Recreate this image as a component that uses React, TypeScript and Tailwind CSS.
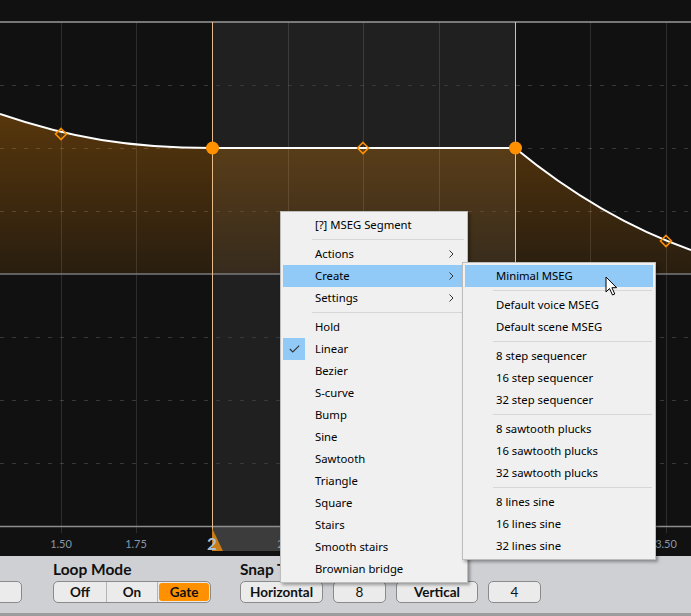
import React from 'react'

const gridX = [61, 136, 288, 363, 439, 590, 666]
const dashY = [85, 148, 211, 337, 400, 463]
// labels under the open menus are left out, only visible ones are drawn
const labels: { x: number; t: string; major?: boolean }[] = [
  { x: 61, t: '1.50' },
  { x: 136, t: '1.75' },
  { x: 212, t: '2', major: true },
  { x: 288, t: '2.25' },
  { x: 666, t: '3.50' },
]

type Entry = { label?: string; sep?: boolean; sub?: boolean; active?: boolean; checked?: boolean }

const mainMenu: Entry[] = [
  { label: '[?] MSEG Segment' },
  { sep: true },
  { label: 'Actions', sub: true },
  { label: 'Create', sub: true, active: true },
  { label: 'Settings', sub: true },
  { sep: true },
  { label: 'Hold' },
  { label: 'Linear', checked: true },
  { label: 'Bezier' },
  { label: 'S-curve' },
  { label: 'Bump' },
  { label: 'Sine' },
  { label: 'Sawtooth' },
  { label: 'Triangle' },
  { label: 'Square' },
  { label: 'Stairs' },
  { label: 'Smooth stairs' },
  { label: 'Brownian bridge' },
]

const createMenu: Entry[] = [
  { label: 'Minimal MSEG', active: true },
  { sep: true },
  { label: 'Default voice MSEG' },
  { label: 'Default scene MSEG' },
  { sep: true },
  { label: '8 step sequencer' },
  { label: '16 step sequencer' },
  { label: '32 step sequencer' },
  { sep: true },
  { label: '8 sawtooth plucks' },
  { label: '16 sawtooth plucks' },
  { label: '32 sawtooth plucks' },
  { sep: true },
  { label: '8 lines sine' },
  { label: '16 lines sine' },
  { label: '32 lines sine' },
]

function Diamond({ x, y }: { x: number; y: number }) {
  return (
    <path
      d={`M${x} ${y - 5.5} L${x + 5.5} ${y} L${x} ${y + 5.5} L${x - 5.5} ${y} Z`}
      fill="none"
      stroke="#ff9000"
      strokeWidth={1.6}
    />
  )
}

function Graph() {
  return (
    <svg width={691} height={556} className="block" style={{ fontFamily: 'Lato, sans-serif' }}>
      <defs>
        <linearGradient id="fill" x1="0" y1="110" x2="0" y2="274" gradientUnits="userSpaceOnUse">
          <stop offset="0" stopColor="#ff9000" stopOpacity={0.3} />
          <stop offset="1" stopColor="#ff9000" stopOpacity={0.1} />
        </linearGradient>
      </defs>
      <rect width={691} height={556} fill="#111111" />
      <rect x={212} y={22} width={303} height={504} fill="#202020" />
      <rect x={212} y={527} width={303} height={24} fill="#3c3c3c" />
      {dashY.map((y) => (
        <line key={y} x1={0} x2={691} y1={y + 0.5} y2={y + 0.5} stroke="#383838" strokeDasharray="4 8" />
      ))}
      {gridX.map((x) => (
        <line key={x} x1={x + 0.5} x2={x + 0.5} y1={22} y2={533} stroke="rgba(255,255,255,0.12)" />
      ))}
      <path
        d="M0 114 C70 138 130 148 212 148 L515 148 C560 185 620 225 691 250 L691 274 L0 274 Z"
        fill="url(#fill)"
      />
      <line x1={0} x2={691} y1={22} y2={22} stroke="#9a9a9a" strokeWidth={1.5} />
      <line x1={0} x2={691} y1={274} y2={274} stroke="#7a7a7a" strokeWidth={1.5} />
      <line x1={0} x2={691} y1={526.5} y2={526.5} stroke="#8e8e8e" strokeWidth={1.5} />
      <line x1={212.5} x2={212.5} y1={22} y2={551} stroke="#e8bb8a" />
      <line x1={515.5} x2={515.5} y1={22} y2={526} stroke="#e8bb8a" />
      <path
        d="M0 114 C70 138 130 148 212 148 L515 148 C560 185 620 225 691 250"
        fill="none"
        stroke="#ffffff"
        strokeWidth={2}
      />
      <Diamond x={61} y={134} />
      <Diamond x={363} y={148} />
      <Diamond x={666} y={241} />
      <circle cx={212.5} cy={148} r={6.5} fill="#ff9000" />
      <circle cx={515.5} cy={148} r={6.5} fill="#ff9000" />
      <polygon points="212,528 212,551 223,551" fill="#c97c17" />
      {labels.map((l) =>
        l.major ? (
          <text key={l.t} x={l.x} y={550} textAnchor="middle" fontSize={17} fontWeight={700} fill="#aec0d2">
            {l.t}
          </text>
        ) : (
          <text key={l.t} x={l.x} y={548} textAnchor="middle" fontSize={11} fill="#8898a8">
            {l.t}
          </text>
        )
      )}
    </svg>
  )
}

function Chevron() {
  return (
    <svg width={5} height={8} viewBox="0 0 5 8" className="absolute right-[11px] top-[7px]">
      <path d="M0.5 0.5 L4 4 L0.5 7.5" fill="none" stroke="#333" strokeWidth={1} />
    </svg>
  )
}

function Menu({ items, className, textLeft, sepLeft }: { items: Entry[]; className: string; textLeft: string; sepLeft: string }) {
  return (
    <div
      className={`absolute bg-[#f0f0f0] border border-[#bdbdbd] shadow-[2px_2px_3px_rgba(0,0,0,0.35)] px-[2px] ${className}`}
      style={{ fontFamily: '"Segoe UI", "Noto Sans", sans-serif' }}
    >
      {items.map((it, i) =>
        it.sep ? (
          <div key={i} className={`h-[7px] flex items-center pr-[1px] ${sepLeft}`}>
            <div className="h-px w-full bg-[#d7d7d7]" />
          </div>
        ) : (
          <div
            key={i}
            className={`relative h-[22px] flex items-center text-[11.3px] text-black ${textLeft} ${it.active ? 'bg-[#91c9f7]' : ''}`}
          >
            {it.checked && (
              <div className="absolute left-0 top-0 w-[22px] h-[22px] bg-[#91c9f7] flex items-center justify-center">
                <svg width={11} height={8} viewBox="0 0 11 8">
                  <path d="M0.8 4 L3.8 7 L10.2 0.6" fill="none" stroke="#333" strokeWidth={1.1} />
                </svg>
              </div>
            )}
            <span className="leading-none">{it.label}</span>
            {it.sub && <Chevron />}
          </div>
        )
      )}
    </div>
  )
}

function Cursor() {
  return (
    <svg width={14} height={21} viewBox="0 0 14 21" className="absolute left-[605px] top-[276px]">
      <path
        d="M1 1 L1 16 L4.5 12.5 L7.5 19 L9.8 18 L6.9 11.7 L11.6 11.7 Z"
        fill="#ffffff"
        stroke="#000000"
        strokeWidth={1}
        strokeLinejoin="round"
      />
    </svg>
  )
}

function Btn({ children, w, bold = true }: { children: React.ReactNode; w: string; bold?: boolean }) {
  return (
    <div
      className={`h-[22px] ${w} rounded-[5px] border border-[#8a8a8a] bg-[#ebebeb] flex items-center justify-center text-[13.5px] text-[#111] ${bold ? 'font-bold' : ''}`}
    >
      {children}
    </div>
  )
}

export default function App() {
  return (
    <div className="relative w-[691px] h-[616px] overflow-hidden bg-[#ced0d4]" style={{ fontFamily: 'Lato, sans-serif' }}>
      <Graph />
      <div className="h-[57px] flex items-start">
        <div className="mt-[25px] ml-[-20px] h-[22px] w-[42px] rounded-[5px] border border-[#8a8a8a] bg-[#ebebeb]" />
        <div className="ml-[31px] flex flex-col">
          <div className="text-[15.5px] font-bold text-[#111] leading-[18px] pt-[4px] h-[25px]">Loop Mode</div>
          <div className="flex h-[22px] w-[158px] rounded-[5px] border border-[#8a8a8a] bg-[#ebebeb] overflow-hidden text-[13.5px] font-bold text-[#111]">
            <div className="w-[53px] flex items-center justify-center border-r border-[#b4b4b4]">Off</div>
            <div className="w-[51px] flex items-center justify-center border-r border-[#b4b4b4]">On</div>
            <div className="flex-1 flex items-center justify-center bg-[#ff9000] m-[1px] rounded-[3px]">Gate</div>
          </div>
        </div>
        <div className="ml-[29px] flex flex-col">
          <div className="text-[15.5px] font-bold text-[#111] leading-[18px] pt-[4px] h-[25px]">Snap To</div>
          <div className="flex gap-[10px]">
            <Btn w="w-[83px]">Horizontal</Btn>
            <Btn w="w-[53px]" bold={false}>8</Btn>
            <Btn w="w-[82px]">Vertical</Btn>
            <Btn w="w-[53px]" bold={false}>4</Btn>
          </div>
        </div>
      </div>
      <div className="h-[3px] bg-[#9d9d9d]" />
      <Menu items={mainMenu} className="left-[280px] top-[211px] w-[188px] pt-[2px] pb-[2px]" textLeft="pl-[32px]" sepLeft="pl-[29px]" />
      <Menu items={createMenu} className="left-[462px] top-[262px] w-[194px] pt-[2px] pb-[2px]" textLeft="pl-[31px]" sepLeft="pl-[28px]" />
      <Cursor />
    </div>
  )
}
